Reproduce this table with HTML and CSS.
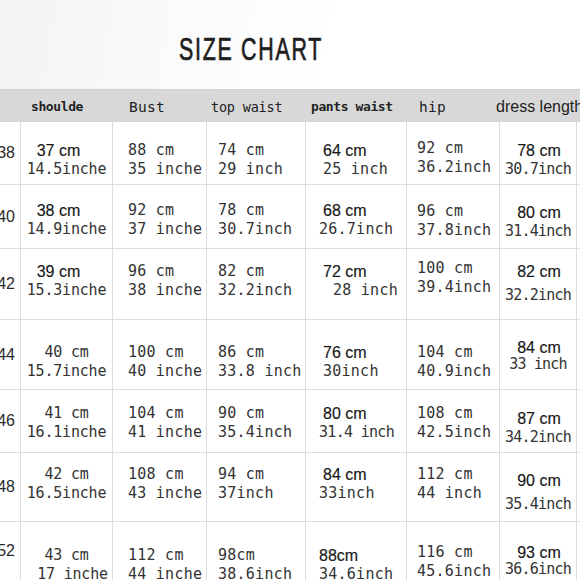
FILE: index.html
```html
<!DOCTYPE html>
<html lang="en">
<head>
<meta charset="utf-8">
<title>Size Chart</title>
<link rel="stylesheet" href="styles.css">
</head>
<body>
<div class="page">
  <div class="title-wrap"><h1 class="title">SIZE CHART</h1></div>
  <div class="head">
    <span class="h h-sh">shoulde</span>
    <span class="h h-big">Bust</span>
    <span class="h">top waist</span>
    <span class="h h-sh">pants waist</span>
    <span class="h h-big">hip</span>
    <span class="h h-dress">dress length</span>
  </div>
  <div class="table">
    <div class="row r1">
      <div class="size">38</div>
      <div class="c sh"><span class="p">37 cm</span><span>14.5inche</span></div>
      <div class="c bu"><span>88 cm</span><span>35 inche</span></div>
      <div class="c tw"><span>74 cm</span><span>29 inch</span></div>
      <div class="c pw"><span class="p">64 cm</span><span>25 inch</span></div>
      <div class="c hp"><span>92 cm</span><span>36.2inch</span></div>
      <div class="c dl"><span class="p">78 cm</span><span>30.7inch</span></div>
      <div class="c ex"></div>
    </div>
    <div class="row r2">
      <div class="size">40</div>
      <div class="c sh"><span class="p">38 cm</span><span>14.9inche</span></div>
      <div class="c bu"><span>92 cm</span><span>37 inche</span></div>
      <div class="c tw"><span>78 cm</span><span>30.7inch</span></div>
      <div class="c pw"><span class="p">68 cm</span><span class="out">26.7inch</span></div>
      <div class="c hp"><span>96 cm</span><span>37.8inch</span></div>
      <div class="c dl"><span class="p">80 cm</span><span>31.4inch</span></div>
      <div class="c ex"></div>
    </div>
    <div class="row r3">
      <div class="size">42</div>
      <div class="c sh"><span class="p">39 cm</span><span>15.3inche</span></div>
      <div class="c bu"><span>96 cm</span><span>38 inche</span></div>
      <div class="c tw"><span>82 cm</span><span>32.2inch</span></div>
      <div class="c pw"><span class="p">72 cm</span><span class="in">28 inch</span></div>
      <div class="c hp"><span>100 cm</span><span>39.4inch</span></div>
      <div class="c dl"><span class="p">82 cm</span><span class="low">32.2inch</span></div>
      <div class="c ex"></div>
    </div>
    <div class="row r4">
      <div class="size">44</div>
      <div class="c sh"><span>40 cm</span><span>15.7inche</span></div>
      <div class="c bu"><span>100 cm</span><span>40 inche</span></div>
      <div class="c tw"><span>86 cm</span><span>33.8 inch</span></div>
      <div class="c pw"><span class="p">76 cm</span><span>30inch</span></div>
      <div class="c hp"><span>104 cm</span><span>40.9inch</span></div>
      <div class="c dl up"><span class="p">84 cm</span><span class="tight">33 inch</span></div>
      <div class="c ex"></div>
    </div>
    <div class="row r5">
      <div class="size">46</div>
      <div class="c sh"><span>41 cm</span><span>16.1inche</span></div>
      <div class="c bu"><span>104 cm</span><span>41 inche</span></div>
      <div class="c tw"><span>90 cm</span><span>35.4inch</span></div>
      <div class="c pw"><span class="p">80 cm</span><span class="out narrow">31.4 inch</span></div>
      <div class="c hp"><span>108 cm</span><span>42.5inch</span></div>
      <div class="c dl down"><span class="p">87 cm</span><span>34.2inch</span></div>
      <div class="c ex"></div>
    </div>
    <div class="row r6">
      <div class="size">48</div>
      <div class="c sh"><span>42 cm</span><span>16.5inche</span></div>
      <div class="c bu"><span>108 cm</span><span>43 inche</span></div>
      <div class="c tw"><span>94 cm</span><span>37inch</span></div>
      <div class="c pw"><span class="p">84 cm</span><span class="out">33inch</span></div>
      <div class="c hp"><span>112 cm</span><span>44 inch</span></div>
      <div class="c dl"><span class="p">90 cm</span><span class="low">35.4inch</span></div>
      <div class="c ex"></div>
    </div>
    <div class="row r7">
      <div class="size">52</div>
      <div class="c sh"><span>43 cm</span><span class="in">17 inche</span></div>
      <div class="c bu"><span>112 cm</span><span>44 inche</span></div>
      <div class="c tw"><span>98cm</span><span>38.6inch</span></div>
      <div class="c pw"><span class="p out">88cm</span><span class="out">34.6inch</span></div>
      <div class="c hp up"><span>116 cm</span><span>45.6inch</span></div>
      <div class="c dl up"><span class="p">93 cm</span><span class="tight">36.6inch</span></div>
      <div class="c ex"></div>
    </div>
  </div>
</div>
</body>
</html>
```
FILE: styles.css
```css
* { box-sizing: border-box; }
html, body {
  margin: 0;
  padding: 0;
  background: #ffffff;
  overflow: hidden;
  width: 580px;
  height: 580px;
}
.page {
  width: 580px;
  height: 580px;
  overflow: hidden;
  background: linear-gradient(100deg, #f3f3f3 0%, #fafafa 25%, #ffffff 50%);
}
.title-wrap {
  height: 89px;
  padding: 34px 0 0 179px;
}
.title {
  margin: 0;
  display: inline-block;
  font-family: "Liberation Sans", Arial, sans-serif;
  font-weight: normal;
  font-size: 31px;
  line-height: 31px;
  letter-spacing: 2.5px;
  color: #1e1e1e;
  -webkit-text-stroke: 0.7px #1e1e1e;
  transform: scaleX(0.69);
  transform-origin: left top;
}
.head {
  height: 33px;
  background: #d8d8d8;
  border-top: 1px solid #d0d0d0;
  display: grid;
  grid-template-columns: 98px 82px 100px 108px 79px auto;
  align-items: center;
  padding: 1px 0 0 31px;
  white-space: nowrap;
}
.h {
  font-family: "DejaVu Sans Mono", monospace;
  font-size: 13.5px;
  letter-spacing: -0.2px;
  color: #222222;
}
.h-sh { font-weight: bold; font-size: 13px; letter-spacing: -0.4px; }
.h-big { font-size: 14.5px; letter-spacing: 0.3px; }
.h-dress {
  font-family: "Liberation Sans", Arial, sans-serif;
  font-size: 16px;
  letter-spacing: 0;
  margin-left: -2px;
  color: #1e1e1e;
}
.table {
  background: #ffffff;
  margin-left: -19px;
  width: 640px;
}
.row {
  display: grid;
  grid-template-columns: 40px 92px 94px 99px 101px 93px 77px 40px;
  border-bottom: 1px solid #dedede;
}
.r1 { height: 63px; }
.r2 { height: 64px; }
.r3 { height: 71px; }
.r4 { height: 70px; }
.r5 { height: 63px; }
.r6 { height: 69px; }
.r7 { height: 70px; }
.size, .c {
  border-right: 1px solid #dcdcdc;
}
.size {
  display: flex;
  align-items: center;
  justify-content: flex-end;
  padding: 0 5px 0 0;
  font-family: "Liberation Sans", Arial, sans-serif;
  font-size: 16px;
  color: #2a2a2a;
}
.r7 .size { align-items: flex-start; padding-top: 20px; }
.c {
  font-family: "DejaVu Sans Mono", monospace;
  font-size: 15px;
  letter-spacing: 0.25px;
  color: #333333;
  white-space: nowrap;
}
.c span { display: block; line-height: 19px; }
.c .p {
  font-family: "Liberation Sans", Arial, sans-serif;
  font-size: 16px;
  letter-spacing: 0;
  color: #161616;
  -webkit-text-stroke: 0.15px #161616;
}
.r1 .c { padding-top: 19px; }
.r2 .c { padding-top: 16px; }
.r3 .c { padding-top: 13px; }
.r4 .c { padding-top: 23px; }
.r5 .c { padding-top: 14px; }
.r6 .c { padding-top: 12px; }
.r7 .c { padding-top: 24px; }
.sh { text-align: center; letter-spacing: -0.2px; }
.sh .p { margin-right: 16px; }
.bu { padding-left: 15px; }
.tw { padding-left: 11px; }
.pw { padding-left: 17px; }
.pw .out { margin-left: -4px; }
.pw .in { margin-left: 10px; }
.pw .narrow { letter-spacing: -0.7px; }
.hp { padding-left: 10px; }
.r1 .hp, .r2 .hp { padding-top: 17px; }
.r3 .hp { padding-top: 10px; }
.dl { text-align: center; letter-spacing: -0.8px; }
.dl .p { margin-left: 2px; }
.dl .low { margin-top: 5px; }
.dl .tight { margin-top: -2px; }
.sh .in { margin-left: 12px; }
.r4 .dl.up { padding-top: 18px; }
.r7 .hp.up { padding-top: 21px; }
.r7 .dl.up { padding-top: 21px; }
.r5 .dl.down { padding-top: 19px; }
.r2 .dl, .r6 .dl { padding-top: 18px; }
.ex { background: #ffffff; }
```
